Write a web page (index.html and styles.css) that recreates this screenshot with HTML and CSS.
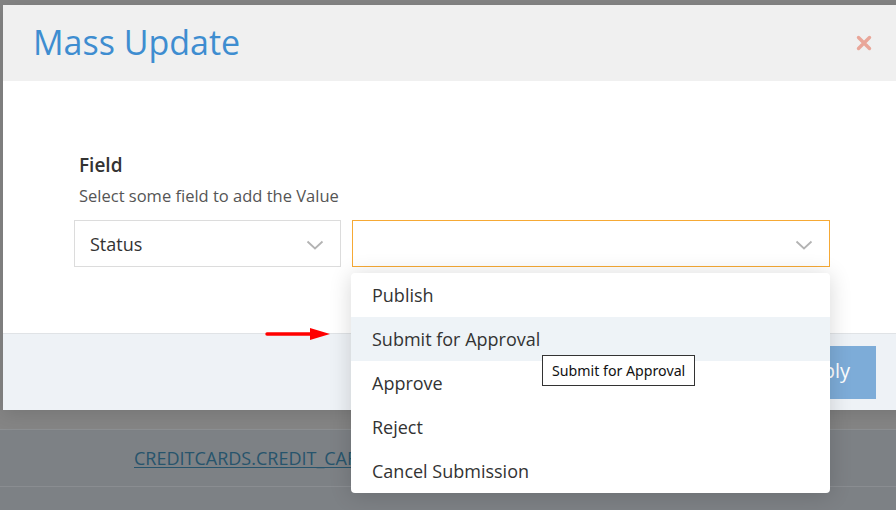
FILE: index.html
```html
<!DOCTYPE html>
<html lang="en">
<head>
<meta charset="utf-8">
<title>Mass Update</title>
<link rel="stylesheet" href="styles.css">
</head>
<body>
  <!-- page behind the dimmed backdrop -->
  <div class="page">
    <div class="page-top"></div>
    <div class="table">
      <div class="row"><a class="row-link" href="#">CREDITCARDS.CREDIT_CARD_NUMBER</a></div>
      <div class="row"></div>
    </div>
  </div>

  <div class="modal">
    <div class="modal-header">
      <h1 class="modal-title">Mass Update</h1>
      <button class="modal-close" aria-label="Close">
        <svg width="16" height="16" viewBox="0 0 16 16"><path d="M2.5 2.5 L13.5 13.5 M13.5 2.5 L2.5 13.5" stroke="#e9a699" stroke-width="3.4" stroke-linecap="round"/></svg>
      </button>
    </div>
    <div class="modal-body">
      <div class="field-label">Field</div>
      <div class="field-hint">Select some field to add the Value</div>
      <div class="field-row">
        <div class="select select-field">
          <span class="select-value">Status</span>
          <svg class="chevron" width="18" height="10" viewBox="0 0 18 10"><path d="M1.5 1.5 L9 8.5 L16.5 1.5" fill="none" stroke="#b3b3b3" stroke-width="1.8"/></svg>
        </div>
        <div class="select select-value-box is-open">
          <span class="select-value"></span>
          <svg class="chevron" width="18" height="10" viewBox="0 0 18 10"><path d="M1.5 1.5 L9 8.5 L16.5 1.5" fill="none" stroke="#b3b3b3" stroke-width="1.8"/></svg>
          <ul class="menu">
            <li class="menu-item">Publish</li>
            <li class="menu-item is-hover">Submit for Approval<span class="tooltip">Submit for Approval</span></li>
            <li class="menu-item">Approve</li>
            <li class="menu-item">Reject</li>
            <li class="menu-item">Cancel Submission</li>
          </ul>
        </div>
      </div>
    </div>
    <div class="modal-footer">
      <button class="btn-apply">Apply</button>
    </div>
  </div>

  <!-- annotation arrow pointing at the hovered option -->
  <svg class="pointer-arrow" width="70" height="16" viewBox="0 0 70 16">
    <path d="M3 8 L48 8" stroke="#ff0000" stroke-width="3.4" stroke-linecap="round"/>
    <path d="M46 2 L66 8 L46 14 Z" fill="#ff0000"/>
  </svg>
</body>
</html>
```

FILE: styles.css
```css
* { box-sizing: border-box; }

html, body {
  margin: 0;
  padding: 0;
  width: 896px;
  height: 510px;
  overflow: hidden;
}

body {
  font-family: "Open Sans", "Noto Sans", sans-serif;
  background: #858585;
  position: relative;
}

/* background page */
.page {
  display: flex;
  flex-direction: column;
}
.page-top {
  height: 430px;
  background: #858585;
  border-bottom: 1px solid #8c8f92;
}
.table {
  background: #7d8185;
}
.row {
  height: 57px;
  border-bottom: 1px solid #8a8d91;
  padding-left: 134px;
  padding-top: 16px;
}
.row-link {
  color: #27546c;
  font-size: 18px;
  text-decoration: underline;
  text-underline-offset: 2px;
  white-space: nowrap;
}

/* modal */
.modal {
  position: absolute;
  left: 3px;
  top: 5px;
  width: 910px;
  background: #fff;
  display: flex;
  flex-direction: column;
  box-shadow: 0 4px 18px rgba(0,0,0,0.12);
}
.modal-header {
  height: 76px;
  background: #f0f0f0;
  display: flex;
  align-items: center;
  padding-left: 30px;
  padding-right: 41px;
}
.modal-title {
  margin: 0;
  font-size: 34px;
  font-weight: 400;
  color: #3e8dd0;
  flex: 1;
  line-height: 1;
  padding-bottom: 2px;
}
.modal-close {
  background: none;
  border: 0;
  padding: 0;
  width: 16px;
  height: 16px;
  display: flex;
}

.modal-body {
  height: 252px;
  padding: 72px 0 0 71px;
}
.field-label {
  font-size: 19px;
  font-weight: 600;
  color: #333;
  line-height: 24px;
  margin-left: 5px;
}
.field-hint {
  font-size: 16.5px;
  color: #555;
  line-height: 20px;
  margin-top: 9px;
  margin-left: 5px;
}
.field-row {
  display: flex;
  gap: 11px;
  margin-top: 14px;
}
.select {
  height: 47px;
  border: 1px solid #dcdcdc;
  background: #fff;
  display: flex;
  align-items: center;
  padding: 0 16px 0 15px;
  position: relative;
}
.select-field { width: 267px; }
.select-value-box {
  width: 478px;
  border-color: #f6a935;
}
.select-value {
  flex: 1;
  font-size: 18px;
  color: #333;
}
.chevron { margin-top: 2px; }

/* open options list */
.menu {
  position: absolute;
  left: -2px;
  top: 52px;
  width: 479px;
  margin: 0;
  padding: 0;
  list-style: none;
  background: #fff;
  border-radius: 4px;
  box-shadow: 0 2px 22px rgba(0,0,0,0.16);
  z-index: 5;
}
.menu-item {
  height: 44px;
  display: flex;
  align-items: center;
  padding-left: 21px;
  font-size: 18px;
  color: #333;
  position: relative;
}
.menu-item.is-hover { background: #eef3f7; }

.tooltip {
  position: absolute;
  left: 191px;
  top: 38px;
  height: 31px;
  padding: 0 9px;
  display: flex;
  align-items: center;
  background: #fff;
  border: 1px solid #333;
  font-family: "Noto Sans", sans-serif;
  font-size: 14.2px;
  color: #111;
  white-space: nowrap;
  z-index: 6;
}

.modal-footer {
  height: 77px;
  background: #eef2f6;
  border-top: 1px solid #e0e3e6;
  display: flex;
  align-items: center;
  justify-content: flex-end;
  padding-right: 37px;
}
.btn-apply {
  width: 104px;
  height: 53px;
  border: 0;
  background: #7dacd8;
  color: #fff;
  font-family: "Open Sans", sans-serif;
  font-size: 20px;
  padding: 0 0 3px;
}

.pointer-arrow {
  position: absolute;
  left: 264px;
  top: 326px;
  z-index: 10;
}
```
